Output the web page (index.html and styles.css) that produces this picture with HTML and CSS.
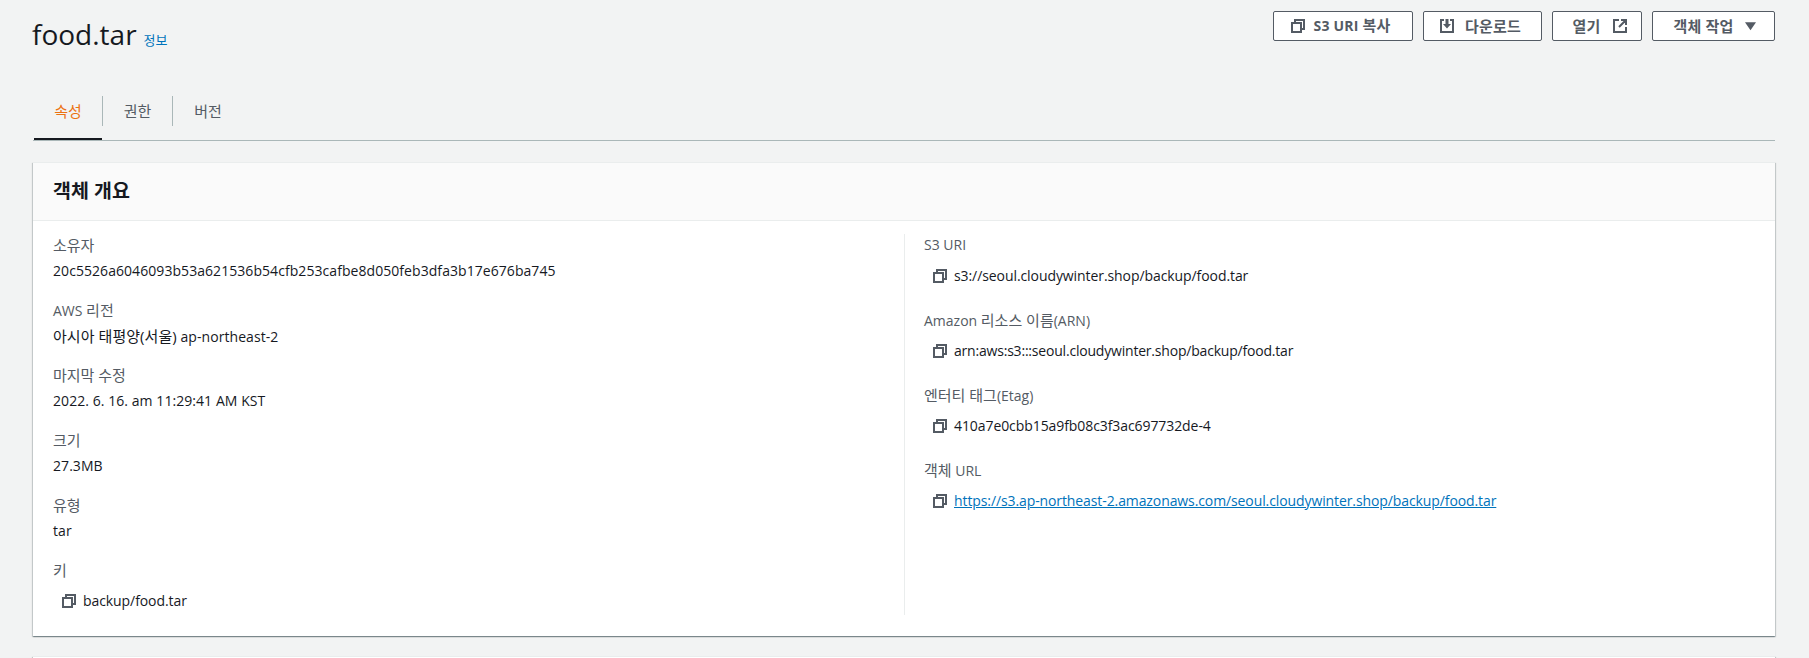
FILE: index.html
```html
<!DOCTYPE html>
<html lang="ko">
<head>
<meta charset="utf-8">
<title>food.tar</title>
<link rel="stylesheet" href="styles.css">
</head>
<body>
<svg class="defs" width="0" height="0">
  <symbol id="copy" viewBox="0 0 16 16"><path d="M2 5h9v9H2zM5 5V2h9v9h-3" fill="none" stroke="currentColor" stroke-width="2"/></symbol>
</svg>
<main class="page">
  <header class="top">
    <div class="title-wrap"><h1 class="title">food.tar</h1><a class="info">정보</a></div>
    <div class="actions">
      <button class="btn btn-copy"><svg class="ico"><use href="#copy"/></svg><span>S3 URI <span class="ko">복사</span></span></button>
      <button class="btn btn-down"><svg class="ico" viewBox="0 0 16 16"><path d="M5 2H2v12h12V2h-3" fill="none" stroke="currentColor" stroke-width="2"/><path d="M6.500 1h3v5H12l-4 4.500L4 6h2.500z" fill="currentColor"/></svg><span class="ko">다운로드</span></button>
      <button class="btn btn-open"><span class="ko">열기</span><svg class="ico" viewBox="0 0 16 16"><path d="M7 2H2v12h12V9M9 2h5v5M14 2L7 9" fill="none" stroke="currentColor" stroke-width="2"/></svg></button>
      <button class="btn btn-act"><span class="ko">객체 작업</span><svg class="caret" viewBox="0 0 12 10"><path d="M0 1h12L6 9.500z" fill="currentColor"/></svg></button>
    </div>
  </header>
  <nav class="tabs">
    <a class="tab active"><span class="tab-in ko">속성</span></a>
    <a class="tab"><span class="tab-in ko">권한</span></a>
    <a class="tab"><span class="tab-in ko">버전</span></a>
  </nav>
  <section class="card">
    <h2 class="card-head">객체 개요</h2>
    <div class="card-body">
      <div class="col col-l">
        <div class="kv"><div class="k ko">소유자</div><div class="v">20c5526a6046093b53a621536b54cfb253cafbe8d050feb3dfa3b17e676ba745</div></div>
        <div class="kv"><div class="k">AWS <span class="ko">리전</span></div><div class="v"><span class="ko">아시아 태평양(서울)</span> ap-northeast-2</div></div>
        <div class="kv"><div class="k ko">마지막 수정</div><div class="v">2022. 6. 16. am 11:29:41 AM KST</div></div>
        <div class="kv"><div class="k ko">크기</div><div class="v">27.3MB</div></div>
        <div class="kv"><div class="k ko">유형</div><div class="v">tar</div></div>
        <div class="kv"><div class="k ko">키</div><div class="cp"><svg class="ico"><use href="#copy"/></svg><span>backup/food.tar</span></div></div>
      </div>
      <div class="col col-r">
        <div class="kv"><div class="k">S3 URI</div><div class="cp"><svg class="ico"><use href="#copy"/></svg><span>s3://seoul.cloudywinter.shop/backup/food.tar</span></div></div>
        <div class="kv"><div class="k">Amazon <span class="ko">리소스 이름</span>(ARN)</div><div class="cp"><svg class="ico"><use href="#copy"/></svg><span class="tight">arn:aws:s3:::seoul.cloudywinter.shop/backup/food.tar</span></div></div>
        <div class="kv"><div class="k"><span class="ko">엔터티 태그</span>(Etag)</div><div class="cp"><svg class="ico"><use href="#copy"/></svg><span>410a7e0cbb15a9fb08c3f3ac697732de-4</span></div></div>
        <div class="kv"><div class="k"><span class="ko">객체</span> URL</div><div class="cp"><svg class="ico"><use href="#copy"/></svg><a class="link">https://s3.ap-northeast-2.amazonaws.com/seoul.cloudywinter.shop/backup/food.tar</a></div></div>
      </div>
    </div>
  </section>
  <div class="card next"></div>
</main>
</body>
</html>
```
FILE: styles.css
```css
* { box-sizing: border-box; }
html, body { margin: 0; height: 658px; overflow: hidden; }
body {
  background: #f2f3f3;
  color: #16191f;
  font-family: "Open Sans", "Noto Sans CJK KR", sans-serif;
  font-size: 14px;
  line-height: 22px;
}
.ko { font-size: 15px; }
.defs { display: block; height: 0; }
.page { padding: 11px 34px 0 33px; }
.top { display: flex; justify-content: space-between; align-items: flex-start; height: 85px; }
.title-wrap { display: flex; align-items: baseline; gap: 7px; padding-top: 3px; margin-left: -1px; }
.title { margin: 0; font-size: 28px; line-height: 40px; font-weight: 400; }
.info { font-size: 13px; color: #0073bb; }
.actions { display: flex; gap: 10px; }
.btn {
  display: flex; align-items: center; justify-content: center;
  height: 30px; padding: 0 0 1px; border: 1px solid #545b64; border-radius: 2px;
  background: #fff; color: #545b64;
  font: 700 14px/22px "Open Sans", "Noto Sans CJK KR", sans-serif;
  letter-spacing: .2px;
}
.btn-copy { width: 140px; gap: 8px; padding-right: 6px; }
.btn-down { width: 119px; gap: 10px; padding-right: 5px; }
.btn-open { width: 90px; gap: 11px; padding-left: 6px; }
.btn-act { width: 123px; gap: 11px; padding-left: 2px; }
.ico { width: 16px; height: 16px; flex: none; color: #545b64; }
.caret { width: 11px; height: 10px; flex: none; }
.tabs { display: flex; height: 45px; border-bottom: 1px solid #aab7b8; padding-left: 1px; }
.tab { position: relative; display: block; width: 70px; height: 44px; color: #545b64; }
.tab-in {
  display: flex; align-items: center; justify-content: center;
  height: 30px; border-right: 1px solid #aab7b8;
}
.tab:last-child .tab-in { border-right: 0; }
.tab.active { width: 69px; color: #ec7211; }
.tab.active::after {
  content: ""; position: absolute; left: 0; bottom: 0;
  width: 68px; height: 2px; background: #16191f;
}
.card {
  margin-top: 21px; background: #fff;
  border-top: 1px solid #eaeded;
  box-shadow: 0 1px 1px 0 rgba(0,28,36,.3), 1px 1px 1px 0 rgba(0,28,36,.15), -1px 1px 1px 0 rgba(0,28,36,.15);
}
.card-head {
  margin: 0; height: 58px; padding: 0 20px 2px;
  display: flex; align-items: center;
  background: #fafafa; border-bottom: 1px solid #eaeded;
  font-size: 19.5px; line-height: 22px; font-weight: 700;
}
.card-body { display: flex; padding: 13px 20px 21px; }
.col { display: flex; flex-direction: column; }
.col-l { width: 852px; gap: 17px; border-right: 1px solid #eaeded; min-height: 381px; }
.col-r { padding-left: 19px; gap: 19px; }
.k { color: #545b64; height: 22px; }
.v { height: 26px; padding-top: 4px; letter-spacing: .06px; }
.cp { display: flex; align-items: center; gap: 6px; height: 34px; padding-left: 8px; padding-top: 5px; letter-spacing: -.08px; }
.tight { letter-spacing: -.2px; }
.link { color: #0073bb; text-decoration: underline; letter-spacing: -.1px; }
.next { margin-top: 20px; height: 10px; }
```
